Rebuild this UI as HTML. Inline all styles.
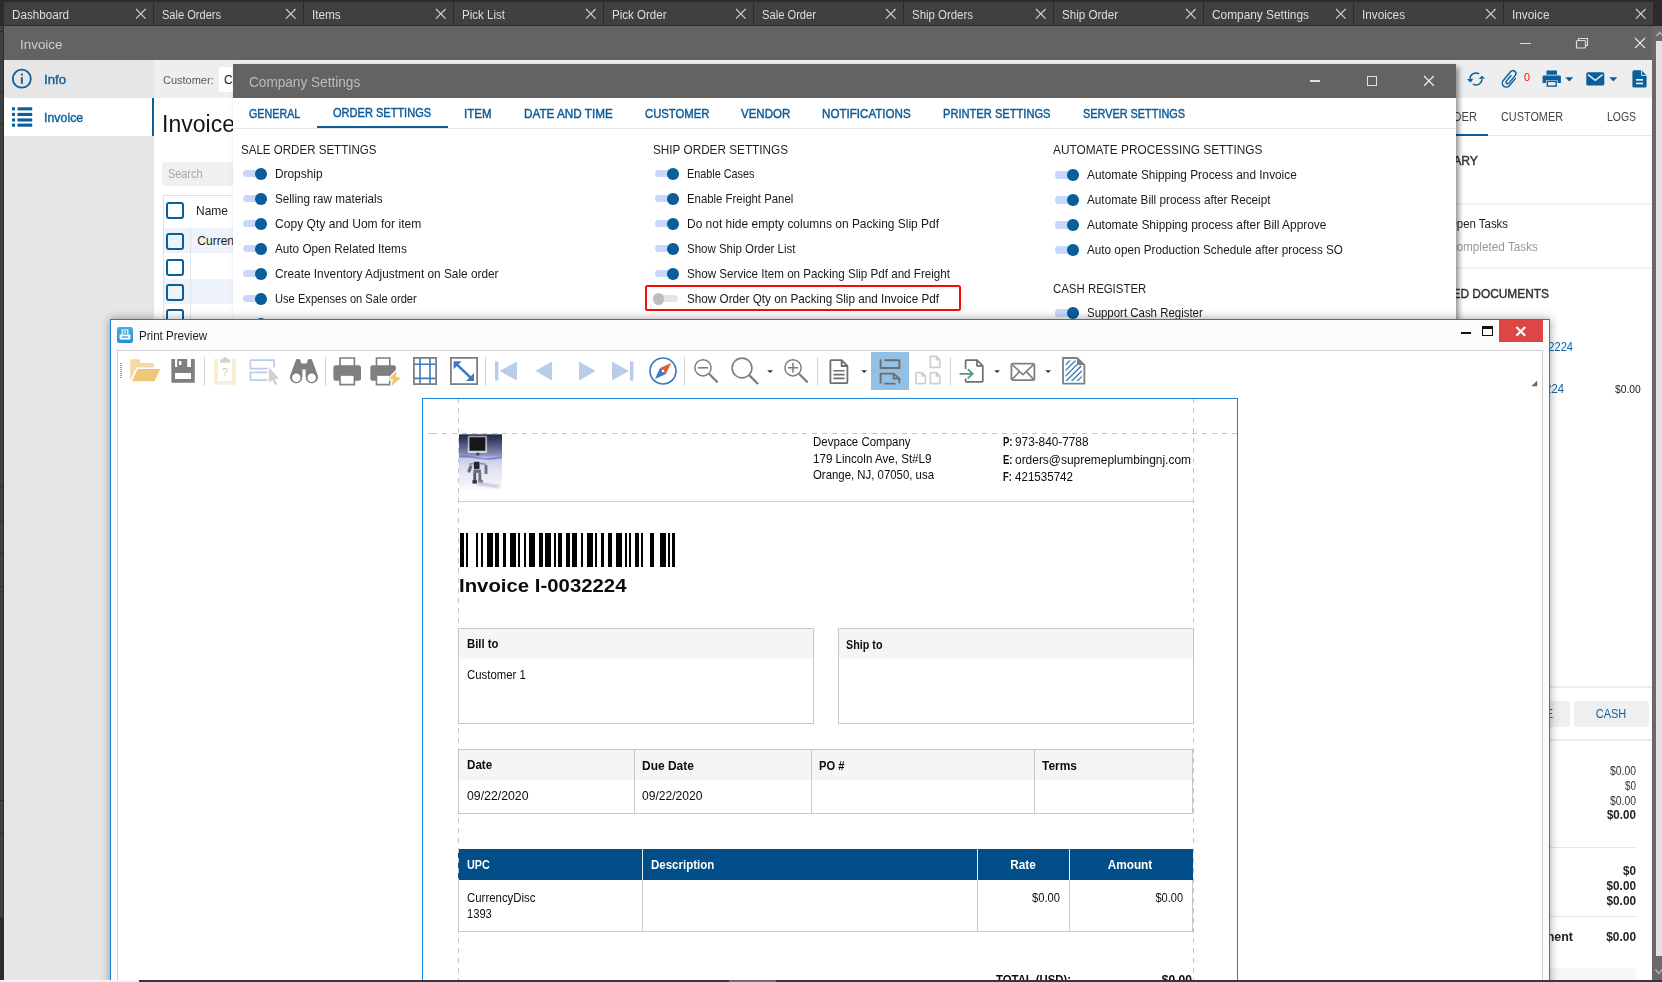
<!DOCTYPE html>
<html><head><meta charset="utf-8"><title>Invoice</title>
<style>
html,body{margin:0;padding:0;overflow:hidden;width:1662px;height:982px}
body{width:1662px;height:982px;overflow:hidden;position:relative;background:#e6e6e6;
font-family:"Liberation Sans",sans-serif;}
div,svg{position:absolute;box-sizing:border-box}
.t{white-space:nowrap;}
</style></head>
<body>
<div style="left:0;top:0;width:1662px;height:982px;overflow:hidden">
<div style="left:0px;top:0px;width:1662px;height:26px;background:#2b2b2b;"></div>
<div style="left:4px;top:2px;width:149px;height:23px;background:#404040;"></div>
<div class="t" id="t0" style="top:8.84px;font-size:12px;line-height:12px;color:#dedede;left:12.00px;transform:scaleX(0.9707);transform-origin:left center;">Dashboard</div>
<svg style="left:134.79999999999998px;top:8.399999999999999px;" width="11.6" height="11.6" viewBox="0 0 11.6 11.6"><path d="M1 1 L10.6 10.6 M10.6 1 L1 10.6" stroke="#d0d0d0" stroke-width="1.15" fill="none" stroke-linecap="butt"/></svg>
<div style="left:154px;top:2px;width:149px;height:23px;background:#404040;"></div>
<div class="t" id="t1" style="top:8.84px;font-size:12px;line-height:12px;color:#dedede;left:162.00px;transform:scaleX(0.9214);transform-origin:left center;">Sale Orders</div>
<svg style="left:284.8px;top:8.399999999999999px;" width="11.6" height="11.6" viewBox="0 0 11.6 11.6"><path d="M1 1 L10.6 10.6 M10.6 1 L1 10.6" stroke="#d0d0d0" stroke-width="1.15" fill="none" stroke-linecap="butt"/></svg>
<div style="left:304px;top:2px;width:149px;height:23px;background:#404040;"></div>
<div class="t" id="t2" style="top:8.84px;font-size:12px;line-height:12px;color:#dedede;left:312.00px;transform:scaleX(0.9781);transform-origin:left center;">Items</div>
<svg style="left:434.8px;top:8.399999999999999px;" width="11.6" height="11.6" viewBox="0 0 11.6 11.6"><path d="M1 1 L10.6 10.6 M10.6 1 L1 10.6" stroke="#d0d0d0" stroke-width="1.15" fill="none" stroke-linecap="butt"/></svg>
<div style="left:454px;top:2px;width:149px;height:23px;background:#404040;"></div>
<div class="t" id="t3" style="top:8.84px;font-size:12px;line-height:12px;color:#dedede;left:462.00px;transform:scaleX(0.9622);transform-origin:left center;">Pick List</div>
<svg style="left:584.8000000000001px;top:8.399999999999999px;" width="11.6" height="11.6" viewBox="0 0 11.6 11.6"><path d="M1 1 L10.6 10.6 M10.6 1 L1 10.6" stroke="#d0d0d0" stroke-width="1.15" fill="none" stroke-linecap="butt"/></svg>
<div style="left:604px;top:2px;width:149px;height:23px;background:#404040;"></div>
<div class="t" id="t4" style="top:8.84px;font-size:12px;line-height:12px;color:#dedede;left:612.00px;transform:scaleX(0.9614);transform-origin:left center;">Pick Order</div>
<svg style="left:734.8000000000001px;top:8.399999999999999px;" width="11.6" height="11.6" viewBox="0 0 11.6 11.6"><path d="M1 1 L10.6 10.6 M10.6 1 L1 10.6" stroke="#d0d0d0" stroke-width="1.15" fill="none" stroke-linecap="butt"/></svg>
<div style="left:754px;top:2px;width:149px;height:23px;background:#404040;"></div>
<div class="t" id="t5" style="top:8.84px;font-size:12px;line-height:12px;color:#dedede;left:762.00px;transform:scaleX(0.9305);transform-origin:left center;">Sale Order</div>
<svg style="left:884.8000000000001px;top:8.399999999999999px;" width="11.6" height="11.6" viewBox="0 0 11.6 11.6"><path d="M1 1 L10.6 10.6 M10.6 1 L1 10.6" stroke="#d0d0d0" stroke-width="1.15" fill="none" stroke-linecap="butt"/></svg>
<div style="left:904px;top:2px;width:149px;height:23px;background:#404040;"></div>
<div class="t" id="t6" style="top:8.84px;font-size:12px;line-height:12px;color:#dedede;left:912.00px;transform:scaleX(0.9527);transform-origin:left center;">Ship Orders</div>
<svg style="left:1034.8px;top:8.399999999999999px;" width="11.6" height="11.6" viewBox="0 0 11.6 11.6"><path d="M1 1 L10.6 10.6 M10.6 1 L1 10.6" stroke="#d0d0d0" stroke-width="1.15" fill="none" stroke-linecap="butt"/></svg>
<div style="left:1054px;top:2px;width:149px;height:23px;background:#404040;"></div>
<div class="t" id="t7" style="top:8.84px;font-size:12px;line-height:12px;color:#dedede;left:1062.00px;transform:scaleX(0.9650);transform-origin:left center;">Ship Order</div>
<svg style="left:1184.8px;top:8.399999999999999px;" width="11.6" height="11.6" viewBox="0 0 11.6 11.6"><path d="M1 1 L10.6 10.6 M10.6 1 L1 10.6" stroke="#d0d0d0" stroke-width="1.15" fill="none" stroke-linecap="butt"/></svg>
<div style="left:1204px;top:2px;width:149px;height:23px;background:#404040;"></div>
<div class="t" id="t8" style="top:8.84px;font-size:12px;line-height:12px;color:#dedede;left:1212.00px;transform:scaleX(0.9892);transform-origin:left center;">Company Settings</div>
<svg style="left:1334.8px;top:8.399999999999999px;" width="11.6" height="11.6" viewBox="0 0 11.6 11.6"><path d="M1 1 L10.6 10.6 M10.6 1 L1 10.6" stroke="#d0d0d0" stroke-width="1.15" fill="none" stroke-linecap="butt"/></svg>
<div style="left:1354px;top:2px;width:149px;height:23px;background:#404040;"></div>
<div class="t" id="t9" style="top:8.84px;font-size:12px;line-height:12px;color:#dedede;left:1362.00px;transform:scaleX(0.9766);transform-origin:left center;">Invoices</div>
<svg style="left:1484.8px;top:8.399999999999999px;" width="11.6" height="11.6" viewBox="0 0 11.6 11.6"><path d="M1 1 L10.6 10.6 M10.6 1 L1 10.6" stroke="#d0d0d0" stroke-width="1.15" fill="none" stroke-linecap="butt"/></svg>
<div style="left:1504px;top:2px;width:149px;height:23px;background:#404040;"></div>
<div class="t" id="t10" style="top:8.84px;font-size:12px;line-height:12px;color:#dedede;left:1512.00px;transform:scaleX(0.9860);transform-origin:left center;">Invoice</div>
<svg style="left:1634.8px;top:8.399999999999999px;" width="11.6" height="11.6" viewBox="0 0 11.6 11.6"><path d="M1 1 L10.6 10.6 M10.6 1 L1 10.6" stroke="#d0d0d0" stroke-width="1.15" fill="none" stroke-linecap="butt"/></svg>
<div style="left:0px;top:26px;width:4px;height:954px;background:#2b2b2b;"></div>
<div style="left:0px;top:26px;width:3px;height:891px;background:#404040;"></div>
<div style="left:0px;top:31px;width:3px;height:1px;background:#2b2b2b;"></div>
<div style="left:0px;top:61px;width:3px;height:1px;background:#2b2b2b;"></div>
<div style="left:0px;top:91px;width:3px;height:1px;background:#2b2b2b;"></div>
<div style="left:0px;top:124px;width:3px;height:1px;background:#2b2b2b;"></div>
<div style="left:0px;top:486px;width:3px;height:1px;background:#2b2b2b;"></div>
<div style="left:0px;top:521px;width:3px;height:1px;background:#2b2b2b;"></div>
<div style="left:0px;top:553px;width:3px;height:1px;background:#2b2b2b;"></div>
<div style="left:0px;top:586px;width:3px;height:1px;background:#2b2b2b;"></div>
<div style="left:0px;top:800px;width:3px;height:1px;background:#2b2b2b;"></div>
<div style="left:0px;top:833px;width:3px;height:1px;background:#2b2b2b;"></div>
<div style="left:4px;top:26px;width:1648px;height:34px;background:#636363;"></div>
<div class="t" id="t11" style="top:37.63px;font-size:13.2px;line-height:13.2px;color:#cdcdcd;left:20.30px;transform:scaleX(1.0168);transform-origin:left center;">Invoice</div>
<div style="left:1520px;top:42.5px;width:10.5px;height:1.3px;background:#dcdcdc;"></div>
<svg style="left:1575px;top:37px;" width="14" height="12" viewBox="0 0 14 12"><path d="M3.5 3.5 V1.5 H12.5 V8.5 H10.5" fill="none" stroke="#dcdcdc" stroke-width="1.1"/><rect x="1.5" y="3.5" width="9" height="7.5" rx="1" fill="none" stroke="#dcdcdc" stroke-width="1.2"/></svg>
<svg style="left:1633.5px;top:37.2px;" width="12" height="12" viewBox="0 0 12 12"><path d="M1 1 L11 11 M11 1 L1 11" stroke="#e6e6e6" stroke-width="1.2" fill="none" stroke-linecap="butt"/></svg>
<div style="left:1652px;top:26px;width:10px;height:954px;background:#696969;"></div>
<div style="left:1656px;top:41px;width:6px;height:915px;background:#e3e3e3;"></div>
<svg style="left:1656px;top:30.6px;" width="7" height="6" viewBox="0 0 7 6"><path d="M0.5 5 L3.8 1.5 L7 5" fill="none" stroke="#bdbdbd" stroke-width="1.2"/></svg>
<svg style="left:1655px;top:968px;" width="7" height="7" viewBox="0 0 7 7"><path d="M0.5 1.5 L3.8 5.5 L7 1.5" fill="none" stroke="#bdbdbd" stroke-width="1.2"/></svg>
<div style="left:4px;top:60px;width:150px;height:920px;background:#e6e6e6;"></div>
<div style="left:4px;top:98px;width:148px;height:38px;background:#ffffff;"></div>
<div style="left:152px;top:98px;width:2px;height:38px;background:#095e9b;"></div>
<svg style="left:11px;top:68px;" width="22" height="22" viewBox="0 0 22 22"><circle cx="10.8" cy="10.7" r="9" fill="none" stroke="#095e9b" stroke-width="1.8"/><rect x="9.9" y="9.2" width="1.9" height="6.6" fill="#095e9b"/><rect x="9.9" y="5.6" width="1.9" height="2" fill="#095e9b"/></svg>
<div class="t" id="t12" style="top:73.80px;font-size:12.4px;line-height:12.4px;color:#10639f;-webkit-text-stroke:0.42px currentColor;left:43.80px;transform:scaleX(1.0642);transform-origin:left center;">Info</div>
<svg style="left:11.8px;top:107px;" width="21" height="20" viewBox="0 0 21 20"><rect x="0" y="0.3" width="3" height="3.1" fill="#095e9b"/><rect x="5.5" y="0.3" width="14.7" height="3.1" fill="#095e9b"/><rect x="0" y="5.9" width="3" height="3.1" fill="#095e9b"/><rect x="5.5" y="5.9" width="14.7" height="3.1" fill="#095e9b"/><rect x="0" y="11.4" width="3" height="3.1" fill="#095e9b"/><rect x="5.5" y="11.4" width="14.7" height="3.1" fill="#095e9b"/><rect x="0" y="16.6" width="3" height="3.1" fill="#095e9b"/><rect x="5.5" y="16.6" width="14.7" height="3.1" fill="#095e9b"/></svg>
<div class="t" id="t13" style="top:112.10px;font-size:12.4px;line-height:12.4px;color:#10639f;-webkit-text-stroke:0.42px currentColor;left:43.80px;transform:scaleX(0.9983);transform-origin:left center;">Invoice</div>
<div style="left:154px;top:60px;width:1498px;height:38px;background:#eeeeee;"></div>
<div style="left:154px;top:98px;width:1498px;height:882px;background:#ffffff;"></div>
<div class="t" id="t14" style="top:74.89px;font-size:11px;line-height:11px;color:#5a5a5a;left:162.70px;transform:scaleX(0.9990);transform-origin:left center;">Customer:</div>
<div style="left:219px;top:67px;width:200px;height:25px;background:#ffffff;border-radius:3px;"></div>
<div class="t" id="t15" style="top:73.74px;font-size:12px;line-height:12px;color:#222;left:224.00px;">Customer 1</div>
<div class="t" id="t16" style="top:112.53px;font-size:23px;line-height:23px;color:#141414;left:162.20px;transform:scaleX(1.0017);transform-origin:left center;">Invoice</div>
<div style="left:162px;top:162px;width:240px;height:24px;background:#f0f0f0;border-radius:3px;"></div>
<div class="t" id="t17" style="top:168.04px;font-size:12px;line-height:12px;color:#a8a8a8;left:168.00px;transform:scaleX(0.9071);transform-origin:left center;">Search</div>
<div style="left:163px;top:195px;width:600px;height:200px;background:#ffffff;border:1px solid #dbe3ea;"></div>
<div style="left:164px;top:227.5px;width:600px;height:25.6px;background:#edf3f8;"></div>
<div style="left:164px;top:278.7px;width:600px;height:25.6px;background:#edf3f8;"></div>
<div style="left:190px;top:227.5px;width:1px;height:120px;background:#dfe6ec;"></div>
<div style="left:166.4px;top:202.3px;width:17.6px;height:17px;border:2px solid #095e9b;border-radius:3px;"></div>
<div style="left:166.4px;top:232.8px;width:17.6px;height:17px;border:2px solid #095e9b;border-radius:3px;"></div>
<div style="left:166.4px;top:258.6px;width:17.6px;height:17px;border:2px solid #095e9b;border-radius:3px;"></div>
<div style="left:166.4px;top:284.4px;width:17.6px;height:17px;border:2px solid #095e9b;border-radius:3px;"></div>
<div style="left:166.4px;top:308.7px;width:17.6px;height:17px;border:2px solid #095e9b;border-radius:3px;"></div>
<div class="t" id="t18" style="top:205.04px;font-size:12px;line-height:12px;color:#222;left:196.40px;transform:scaleX(0.9995);transform-origin:left center;">Name</div>
<div class="t" id="t19" style="top:235.24px;font-size:12px;line-height:12px;color:#222;left:197.30px;">CurrencyDisc</div>
<svg style="left:1466px;top:70px;" width="20" height="18" viewBox="0 0 20 18"><path d="M4.01 8.69 A6.0 6.0 0 0 1 13.18 3.91" fill="none" stroke="#095e9b" stroke-width="1.5"/><path d="M0.8 9.3 L7.3 8.8 L4.7 12.4 Z" fill="#095e9b"/><path d="M15.99 9.31 A6.0 6.0 0 0 1 6.82 14.09" fill="none" stroke="#095e9b" stroke-width="1.5"/><path d="M15.8 5.7 L12.7 8.9 L19.1 8.5 Z" fill="#095e9b"/></svg>
<svg style="left:1499px;top:68px;" width="22" height="22" viewBox="0 0 22 22"><g transform="translate(10.9,10.8) rotate(40)" fill="none" stroke="#095e9b" stroke-width="1.45" stroke-linecap="round"><path d="M4 -3.6 V5.6 A4 4 0 0 1 -4 5.6 V-5.8 A3 3 0 0 1 2 -5.8 V4 A1.6 1.6 0 0 1 -1.2 4 V-3.2"/></g></svg>
<div class="t" id="t20" style="top:72.23px;font-size:10.6px;line-height:10.6px;color:#fb0d0d;left:1524.20px;transform:scaleX(1.0159);transform-origin:left center;">0</div>
<svg style="left:1542px;top:70px;" width="20" height="17" viewBox="0 0 20 17"><rect x="4.5" y="0.5" width="10.5" height="4.2" fill="#095e9b"/><path d="M1.6 5.6 H17.9 Q18.9 5.6 18.9 6.6 V13 H15.6 V10.2 H3.9 V13 H0.6 V6.6 Q0.6 5.6 1.6 5.6 Z" fill="#095e9b"/><rect x="5.3" y="11.4" width="8.9" height="4.7" fill="none" stroke="#095e9b" stroke-width="1.4"/></svg>
<svg style="left:1565px;top:76.5px;" width="9" height="5" viewBox="0 0 9 5"><path d="M0.3 0.3 H8.3 L4.3 4.6 Z" fill="#095e9b"/></svg>
<svg style="left:1586px;top:72px;" width="19" height="14" viewBox="0 0 19 14"><rect x="0.3" y="0.3" width="18" height="13.2" rx="1.6" fill="#095e9b"/><path d="M2 2.6 L9.3 8.3 L16.6 2.6" fill="none" stroke="#eeeeee" stroke-width="1.5"/></svg>
<svg style="left:1609px;top:76.5px;" width="9" height="5" viewBox="0 0 9 5"><path d="M0.3 0.3 H8.3 L4.3 4.6 Z" fill="#095e9b"/></svg>
<svg style="left:1632px;top:70px;" width="16" height="18" viewBox="0 0 16 18"><path d="M2 0.3 H9.5 L14.6 5.4 V16 Q14.6 17.6 13 17.6 H2 Q0.4 17.6 0.4 16 V1.9 Q0.4 0.3 2 0.3 Z" fill="#095e9b"/><rect x="4" y="9" width="7" height="1.7" fill="#eeeeee"/><rect x="4" y="12.6" width="7" height="1.7" fill="#eeeeee"/><path d="M9.5 0.3 V5.4 H14.6" fill="none" stroke="#eeeeee" stroke-width="0.9"/></svg>
<div style="left:1400px;top:135px;width:252px;height:1px;background:#e9e9e9;"></div>
<div style="left:1400px;top:134px;width:88px;height:2px;background:#095e9b;"></div>
<div class="t" id="t21" style="top:110.54px;font-size:12px;line-height:12px;color:#444;left:277.00px;width:1200px;text-align:right;transform:scaleX(0.9229);transform-origin:right center;">ORDER</div>
<div class="t" id="t22" style="top:110.54px;font-size:12px;line-height:12px;color:#444;left:1501.00px;transform:scaleX(0.9057);transform-origin:left center;">CUSTOMER</div>
<div class="t" id="t23" style="top:110.54px;font-size:12px;line-height:12px;color:#444;left:1607.00px;transform:scaleX(0.8693);transform-origin:left center;">LOGS</div>
<div class="t" id="t24" style="top:155.39px;font-size:12.3px;line-height:12.3px;color:#333;-webkit-text-stroke:0.42px currentColor;left:277.70px;width:1200px;text-align:right;transform:scaleX(0.9898);transform-origin:right center;">SUMMARY</div>
<div style="left:1400px;top:202.5px;width:252px;height:2px;background:#f1f1f1;"></div>
<div style="left:1400px;top:266.5px;width:252px;height:2px;background:#f1f1f1;"></div>
<div class="t" id="t25" style="top:217.89px;font-size:12.3px;line-height:12.3px;color:#222;left:307.70px;width:1200px;text-align:right;transform:scaleX(0.9271);transform-origin:right center;">Open Tasks</div>
<div class="t" id="t26" style="top:240.59px;font-size:12.3px;line-height:12.3px;color:#9a9a9a;left:337.70px;width:1200px;text-align:right;transform:scaleX(0.9565);transform-origin:right center;">Completed Tasks</div>
<div class="t" id="t27" style="top:287.59px;font-size:12.3px;line-height:12.3px;color:#333;-webkit-text-stroke:0.42px currentColor;left:349.00px;width:1200px;text-align:right;transform:scaleX(0.9677);transform-origin:right center;">RELATED DOCUMENTS</div>
<div class="t" id="t28" style="top:341.09px;font-size:12.3px;line-height:12.3px;color:#10639f;left:373.00px;width:1200px;text-align:right;transform:scaleX(0.9032);transform-origin:right center;">SO-0032224</div>
<div class="t" id="t29" style="top:382.59px;font-size:12.3px;line-height:12.3px;color:#10639f;left:364.00px;width:1200px;text-align:right;transform:scaleX(0.9140);transform-origin:right center;">S-0032224</div>
<div class="t" id="t30" style="top:383.18px;font-size:11.6px;line-height:11.6px;color:#222;left:1615.30px;transform:scaleX(0.8857);transform-origin:left center;">$0.00</div>
<div style="left:1540px;top:686px;width:112px;height:1.5px;background:#ececec;"></div>
<div style="left:1540px;top:739px;width:112px;height:1.5px;background:#ececec;"></div>
<div style="left:1500px;top:701px;width:70px;height:26px;background:#efefef;border-radius:3px;"></div>
<div style="left:1574px;top:701px;width:75px;height:26px;background:#efefef;border-radius:3px;"></div>
<div class="t" id="t31" style="top:708.09px;font-size:12.3px;line-height:12.3px;color:#10639f;left:1011.30px;width:1200px;text-align:center;transform:scaleX(0.8925);transform-origin:center center;">CASH</div>
<div class="t" id="t32" style="top:708.09px;font-size:12.3px;line-height:12.3px;color:#10639f;left:353.00px;width:1200px;text-align:right;transform:scaleX(0.9886);transform-origin:right center;">INVOICE</div>
<div class="t" id="t33" style="top:764.84px;font-size:12px;line-height:12px;color:#333;left:436.00px;width:1200px;text-align:right;transform:scaleX(0.8658);transform-origin:right center;">$0.00</div>
<div class="t" id="t34" style="top:779.84px;font-size:12px;line-height:12px;color:#333;left:436.00px;width:1200px;text-align:right;transform:scaleX(0.8234);transform-origin:right center;">$0</div>
<div class="t" id="t35" style="top:794.84px;font-size:12px;line-height:12px;color:#333;left:436.00px;width:1200px;text-align:right;transform:scaleX(0.8658);transform-origin:right center;">$0.00</div>
<div class="t" id="t36" style="top:809.33px;font-size:12.6px;line-height:12.6px;color:#222;font-weight:700;left:436.00px;width:1200px;text-align:right;transform:scaleX(0.9240);transform-origin:right center;">$0.00</div>
<div style="left:1540px;top:846.5px;width:96px;height:1px;background:#e6e6e6;"></div>
<div class="t" id="t37" style="top:864.53px;font-size:12.6px;line-height:12.6px;color:#222;font-weight:700;left:436.00px;width:1200px;text-align:right;transform:scaleX(0.9275);transform-origin:right center;">$0</div>
<div class="t" id="t38" style="top:879.53px;font-size:12.6px;line-height:12.6px;color:#222;font-weight:700;left:436.00px;width:1200px;text-align:right;transform:scaleX(0.9360);transform-origin:right center;">$0.00</div>
<div class="t" id="t39" style="top:894.53px;font-size:12.6px;line-height:12.6px;color:#222;font-weight:700;left:436.00px;width:1200px;text-align:right;transform:scaleX(0.9360);transform-origin:right center;">$0.00</div>
<div style="left:1540px;top:916px;width:96px;height:1px;background:#e6e6e6;"></div>
<div class="t" id="t40" style="top:931.33px;font-size:12.6px;line-height:12.6px;color:#222;font-weight:700;left:373.00px;width:1200px;text-align:right;transform:scaleX(0.9905);transform-origin:right center;">Payment</div>
<div class="t" id="t41" style="top:931.33px;font-size:12.6px;line-height:12.6px;color:#222;font-weight:700;left:436.00px;width:1200px;text-align:right;transform:scaleX(0.9456);transform-origin:right center;">$0.00</div>
<div style="left:1500px;top:968px;width:136px;height:14px;background:#f6f6f6;border-radius:4px;"></div>
<div style="left:233px;top:64px;width:1223px;height:300px;background:#fff;overflow:hidden;box-shadow:3px 3px 5px rgba(0,0,0,.42);"><div style="left:0px;top:0px;width:1223px;height:34px;background:#636363;"></div>
<div class="t" id="t42" style="top:11.25px;font-size:14px;line-height:14px;color:#bcbcbc;left:16.30px;transform:scaleX(0.9720);transform-origin:left center;">Company Settings</div>
<div style="left:1076.7px;top:16.400000000000006px;width:10.5px;height:1.3px;background:#e0e0e0;"></div>
<div style="left:1133.5px;top:11.799999999999997px;width:10.5px;height:10.2px;border:1.3px solid #e0e0e0;"></div>
<svg style="left:1189.6px;top:11.299999999999997px;" width="11.8" height="11.8" viewBox="0 0 11.8 11.8"><path d="M1 1 L10.8 10.8 M10.8 1 L1 10.8" stroke="#ececec" stroke-width="1.25" fill="none" stroke-linecap="butt"/></svg>
<div class="t" id="t43" style="top:43.52px;font-size:12.2px;line-height:12.2px;color:#0b5a97;-webkit-text-stroke:0.42px currentColor;left:16.25px;transform:scaleX(0.8798);transform-origin:left center;">GENERAL</div>
<div class="t" id="t44" style="top:42.67px;font-size:12.2px;line-height:12.2px;color:#0b5a97;-webkit-text-stroke:0.42px currentColor;left:100.00px;transform:scaleX(0.9055);transform-origin:left center;">ORDER SETTINGS</div>
<div class="t" id="t45" style="top:43.52px;font-size:12.2px;line-height:12.2px;color:#0b5a97;-webkit-text-stroke:0.42px currentColor;left:230.75px;transform:scaleX(0.9442);transform-origin:left center;">ITEM</div>
<div class="t" id="t46" style="top:43.52px;font-size:12.2px;line-height:12.2px;color:#0b5a97;-webkit-text-stroke:0.42px currentColor;left:290.75px;transform:scaleX(0.9612);transform-origin:left center;">DATE AND TIME</div>
<div class="t" id="t47" style="top:43.52px;font-size:12.2px;line-height:12.2px;color:#0b5a97;-webkit-text-stroke:0.42px currentColor;left:411.50px;transform:scaleX(0.9276);transform-origin:left center;">CUSTOMER</div>
<div class="t" id="t48" style="top:43.52px;font-size:12.2px;line-height:12.2px;color:#0b5a97;-webkit-text-stroke:0.42px currentColor;left:507.75px;transform:scaleX(0.9443);transform-origin:left center;">VENDOR</div>
<div class="t" id="t49" style="top:43.52px;font-size:12.2px;line-height:12.2px;color:#0b5a97;-webkit-text-stroke:0.42px currentColor;left:588.75px;transform:scaleX(0.9521);transform-origin:left center;">NOTIFICATIONS</div>
<div class="t" id="t50" style="top:43.52px;font-size:12.2px;line-height:12.2px;color:#0b5a97;-webkit-text-stroke:0.42px currentColor;left:709.50px;transform:scaleX(0.9123);transform-origin:left center;">PRINTER SETTINGS</div>
<div class="t" id="t51" style="top:43.52px;font-size:12.2px;line-height:12.2px;color:#0b5a97;-webkit-text-stroke:0.42px currentColor;left:849.50px;transform:scaleX(0.8929);transform-origin:left center;">SERVER SETTINGS</div>
<div style="left:0px;top:64px;width:1223px;height:1px;background:#e7e7e7;"></div>
<div style="left:84px;top:61.5px;width:130.5px;height:2.5px;background:#095e9b;"></div>
<div class="t" id="t52" style="top:79.99px;font-size:12.3px;line-height:12.3px;color:#1f1f1f;left:8.25px;transform:scaleX(0.9397);transform-origin:left center;">SALE ORDER SETTINGS</div>
<div class="t" id="t53" style="top:79.99px;font-size:12.3px;line-height:12.3px;color:#1f1f1f;left:420.00px;transform:scaleX(0.9560);transform-origin:left center;">SHIP ORDER SETTINGS</div>
<div class="t" id="t54" style="top:79.99px;font-size:12.3px;line-height:12.3px;color:#1f1f1f;left:820.00px;transform:scaleX(0.9631);transform-origin:left center;">AUTOMATE PROCESSING SETTINGS</div>
<div class="t" id="t55" style="top:218.69px;font-size:12.3px;line-height:12.3px;color:#1f1f1f;left:820.00px;transform:scaleX(0.9283);transform-origin:left center;">CASH REGISTER</div>
<div style="left:9.949999999999989px;top:106.15px;width:21px;height:7.3px;background:#c6d8fb;border-radius:3.7px;"></div><div style="left:22.44999999999999px;top:103.94999999999999px;width:11.6px;height:11.6px;background:#095e9b;border-radius:50%;"></div>
<div class="t" id="t56" style="top:104.12px;font-size:12.2px;line-height:12.2px;color:#1a1a1a;left:42.25px;transform:scaleX(0.9737);transform-origin:left center;">Dropship</div>
<div style="left:9.949999999999989px;top:131.15px;width:21px;height:7.3px;background:#c6d8fb;border-radius:3.7px;"></div><div style="left:22.44999999999999px;top:128.95px;width:11.6px;height:11.6px;background:#095e9b;border-radius:50%;"></div>
<div class="t" id="t57" style="top:129.12px;font-size:12.2px;line-height:12.2px;color:#1a1a1a;left:42.25px;transform:scaleX(0.9561);transform-origin:left center;">Selling raw materials</div>
<div style="left:9.949999999999989px;top:156.15px;width:21px;height:7.3px;background:#c6d8fb;border-radius:3.7px;"></div><div style="left:22.44999999999999px;top:153.95px;width:11.6px;height:11.6px;background:#095e9b;border-radius:50%;"></div>
<div class="t" id="t58" style="top:154.12px;font-size:12.2px;line-height:12.2px;color:#1a1a1a;left:42.25px;transform:scaleX(0.9905);transform-origin:left center;">Copy Qty and Uom for item</div>
<div style="left:9.949999999999989px;top:181.15px;width:21px;height:7.3px;background:#c6d8fb;border-radius:3.7px;"></div><div style="left:22.44999999999999px;top:178.95px;width:11.6px;height:11.6px;background:#095e9b;border-radius:50%;"></div>
<div class="t" id="t59" style="top:179.12px;font-size:12.2px;line-height:12.2px;color:#1a1a1a;left:42.25px;transform:scaleX(0.9627);transform-origin:left center;">Auto Open Related Items</div>
<div style="left:9.949999999999989px;top:206.14999999999998px;width:21px;height:7.3px;background:#c6d8fb;border-radius:3.7px;"></div><div style="left:22.44999999999999px;top:203.95px;width:11.6px;height:11.6px;background:#095e9b;border-radius:50%;"></div>
<div class="t" id="t60" style="top:204.12px;font-size:12.2px;line-height:12.2px;color:#1a1a1a;left:42.25px;transform:scaleX(0.9703);transform-origin:left center;">Create Inventory Adjustment on Sale order</div>
<div style="left:9.949999999999989px;top:231.14999999999998px;width:21px;height:7.3px;background:#c6d8fb;border-radius:3.7px;"></div><div style="left:22.44999999999999px;top:228.95px;width:11.6px;height:11.6px;background:#095e9b;border-radius:50%;"></div>
<div class="t" id="t61" style="top:229.12px;font-size:12.2px;line-height:12.2px;color:#1a1a1a;left:42.25px;transform:scaleX(0.9136);transform-origin:left center;">Use Expenses on Sale order</div>
<div style="left:9.949999999999989px;top:256.15px;width:21px;height:7.3px;background:#c6d8fb;border-radius:3.7px;"></div><div style="left:22.44999999999999px;top:253.95px;width:11.6px;height:11.6px;background:#095e9b;border-radius:50%;"></div>
<div class="t" id="t62" style="top:254.12px;font-size:12.2px;line-height:12.2px;color:#1a1a1a;left:42.25px;transform:scaleX(0.9393);transform-origin:left center;">Use Discount on Sale order</div>
<div style="left:421.70000000000005px;top:106.15px;width:21px;height:7.3px;background:#c6d8fb;border-radius:3.7px;"></div><div style="left:434.20000000000005px;top:103.94999999999999px;width:11.6px;height:11.6px;background:#095e9b;border-radius:50%;"></div>
<div class="t" id="t63" style="top:104.12px;font-size:12.2px;line-height:12.2px;color:#1a1a1a;left:454.00px;transform:scaleX(0.8894);transform-origin:left center;">Enable Cases</div>
<div style="left:421.70000000000005px;top:131.15px;width:21px;height:7.3px;background:#c6d8fb;border-radius:3.7px;"></div><div style="left:434.20000000000005px;top:128.95px;width:11.6px;height:11.6px;background:#095e9b;border-radius:50%;"></div>
<div class="t" id="t64" style="top:129.12px;font-size:12.2px;line-height:12.2px;color:#1a1a1a;left:454.00px;transform:scaleX(0.9334);transform-origin:left center;">Enable Freight Panel</div>
<div style="left:421.70000000000005px;top:156.15px;width:21px;height:7.3px;background:#c6d8fb;border-radius:3.7px;"></div><div style="left:434.20000000000005px;top:153.95px;width:11.6px;height:11.6px;background:#095e9b;border-radius:50%;"></div>
<div class="t" id="t65" style="top:154.12px;font-size:12.2px;line-height:12.2px;color:#1a1a1a;left:454.00px;transform:scaleX(0.9814);transform-origin:left center;">Do not hide empty columns on Packing Slip Pdf</div>
<div style="left:421.70000000000005px;top:181.15px;width:21px;height:7.3px;background:#c6d8fb;border-radius:3.7px;"></div><div style="left:434.20000000000005px;top:178.95px;width:11.6px;height:11.6px;background:#095e9b;border-radius:50%;"></div>
<div class="t" id="t66" style="top:179.12px;font-size:12.2px;line-height:12.2px;color:#1a1a1a;left:454.00px;transform:scaleX(0.9421);transform-origin:left center;">Show Ship Order List</div>
<div style="left:421.70000000000005px;top:206.14999999999998px;width:21px;height:7.3px;background:#c6d8fb;border-radius:3.7px;"></div><div style="left:434.20000000000005px;top:203.95px;width:11.6px;height:11.6px;background:#095e9b;border-radius:50%;"></div>
<div class="t" id="t67" style="top:204.12px;font-size:12.2px;line-height:12.2px;color:#1a1a1a;left:454.00px;transform:scaleX(0.9539);transform-origin:left center;">Show Service Item on Packing Slip Pdf and Freight</div>
<div style="left:423.70000000000005px;top:231.14999999999998px;width:21.5px;height:7.3px;background:#e4e4e4;border-radius:3.7px;"></div><div style="left:419.9000000000001px;top:228.95px;width:11.6px;height:11.6px;background:#bdbdbd;border-radius:50%;"></div>
<div class="t" id="t68" style="top:229.12px;font-size:12.2px;line-height:12.2px;color:#1a1a1a;left:454.00px;transform:scaleX(0.9612);transform-origin:left center;">Show Order Qty on Packing Slip and Invoice Pdf</div>
<div style="left:411.5px;top:220.5px;width:316.5px;height:26.5px;border:2.2px solid #f20d0d;border-radius:2.5px;"></div>
<div style="left:821.7px;top:107.4px;width:21px;height:7.3px;background:#c6d8fb;border-radius:3.7px;"></div><div style="left:834.2px;top:105.19999999999999px;width:11.6px;height:11.6px;background:#095e9b;border-radius:50%;"></div>
<div class="t" id="t69" style="top:105.37px;font-size:12.2px;line-height:12.2px;color:#1a1a1a;left:854.00px;transform:scaleX(0.9705);transform-origin:left center;">Automate Shipping Process and Invoice</div>
<div style="left:821.7px;top:132.4px;width:21px;height:7.3px;background:#c6d8fb;border-radius:3.7px;"></div><div style="left:834.2px;top:130.2px;width:11.6px;height:11.6px;background:#095e9b;border-radius:50%;"></div>
<div class="t" id="t70" style="top:130.37px;font-size:12.2px;line-height:12.2px;color:#1a1a1a;left:854.00px;transform:scaleX(0.9640);transform-origin:left center;">Automate Bill process after Receipt</div>
<div style="left:821.7px;top:157.4px;width:21px;height:7.3px;background:#c6d8fb;border-radius:3.7px;"></div><div style="left:834.2px;top:155.2px;width:11.6px;height:11.6px;background:#095e9b;border-radius:50%;"></div>
<div class="t" id="t71" style="top:155.37px;font-size:12.2px;line-height:12.2px;color:#1a1a1a;left:854.00px;transform:scaleX(0.9792);transform-origin:left center;">Automate Shipping process after Bill Approve</div>
<div style="left:821.7px;top:182.4px;width:21px;height:7.3px;background:#c6d8fb;border-radius:3.7px;"></div><div style="left:834.2px;top:180.2px;width:11.6px;height:11.6px;background:#095e9b;border-radius:50%;"></div>
<div class="t" id="t72" style="top:180.37px;font-size:12.2px;line-height:12.2px;color:#1a1a1a;left:854.00px;transform:scaleX(0.9614);transform-origin:left center;">Auto open Production Schedule after process SO</div>
<div style="left:821.7px;top:245.29999999999995px;width:21px;height:7.3px;background:#c6d8fb;border-radius:3.7px;"></div><div style="left:834.2px;top:243.09999999999997px;width:11.6px;height:11.6px;background:#095e9b;border-radius:50%;"></div>
<div class="t" id="t73" style="top:243.27px;font-size:12.2px;line-height:12.2px;color:#1a1a1a;left:854.00px;transform:scaleX(0.9388);transform-origin:left center;">Support Cash Register</div></div>
<div style="left:110px;top:319px;width:1440px;height:670px;background:#fcfcfc;border:1px solid #1b80d4;overflow:hidden;box-shadow:0 0 9px rgba(0,0,0,.38);"><div style="left:0;top:0;width:1438px;height:660px;overflow:hidden"><svg style="left:6px;top:7px;" width="16" height="16" viewBox="0 0 16 16"><defs><linearGradient id="pi" x1="0" y1="0" x2="0" y2="1"><stop offset="0" stop-color="#3fb0ea"/><stop offset="1" stop-color="#1e8fd6"/></linearGradient></defs><rect x="0" y="0" width="16" height="16" rx="2.2" fill="url(#pi)"/><path d="M5.2 7 V3 H10.8 V7" fill="none" stroke="#fff" stroke-width="1.2"/><path d="M2.6 7.4 H13.4 V12.6 H2.6 Z" fill="#fff"/><rect x="4.8" y="9.4" width="6.4" height="1.3" fill="#2a9be0"/><rect x="7" y="4.6" width="2" height="1.6" fill="#fff"/></svg>
<div class="t" id="t74" style="top:9.84px;font-size:12px;line-height:12px;color:#1e1e1e;left:28.30px;transform:scaleX(0.9648);transform-origin:left center;">Print Preview</div>
<div style="left:1349.5px;top:11.600000000000023px;width:10.6px;height:2.5px;background:#111;"></div>
<div style="left:1371.3px;top:5.800000000000011px;width:10.8px;height:10.4px;border:1.3px solid #111;border-top:3.2px solid #111;"></div>
<div style="left:1387.5px;top:0px;width:44px;height:22px;background:#e04545;"></div>
<svg style="left:1404px;top:6px;" width="12" height="11" viewBox="0 0 12 11"><path d="M1.4 1 L10.2 9.8 M10.2 1 L1.4 9.8" stroke="#fff" stroke-width="2.1" fill="none"/></svg>
<div style="left:6px;top:30px;width:1426px;height:640px;background:#ffffff;border:1px solid #cfcfcf;"></div>
<div style="left:9px;top:43px;width:2px;height:16px;background:repeating-linear-gradient(180deg,#9b9b9b 0,#9b9b9b 1px,transparent 1px,transparent 2px)"></div>
<svg style="left:18px;top:38px;" width="33" height="25" viewBox="0 0 33 25"><path d="M1.2 2.2 Q1.2 1.2 2.2 1.2 H10.4 Q11.2 1.2 11.2 2 V5 H24 Q25 5 25 6 V9.6 H7.6 L1.2 22.4 Z" fill="#f3d9a4"/><path d="M8.6 11 H31.4 L25.6 23.2 H3 Z" fill="#edc67a"/></svg>
<svg style="left:59px;top:38px;" width="26" height="26" viewBox="0 0 26 26"><path d="M1.4 1.6 Q1.4 1 2 1 H24.2 Q24.8 1 24.8 1.6 V24.2 Q24.8 24.8 24.2 24.8 H2 Q1.4 24.8 1.4 24.2 Z" fill="#7f7f7f"/><rect x="5" y="1" width="2.2" height="8" fill="#fff"/><rect x="17.2" y="1" width="3.8" height="8" fill="#fff"/><rect x="9" y="3" width="2.4" height="4" fill="#fff"/><rect x="5" y="15" width="16" height="6" fill="#fff"/></svg>
<div style="left:93px;top:37px;width:1px;height:29px;background:#d4d4d4"></div>
<svg style="left:102px;top:36px;" width="25" height="30" viewBox="0 0 25 30"><path d="M1 3 H23 V28.8 H1 Z M5 3 V25 H19 V3 Z" fill="#fbedd5" fill-rule="evenodd"/><path d="M7 3.2 H9.6 Q9.6 1 12 1 Q14.4 1 14.4 3.2 H17 V6.8 H7 Z" fill="#d2d2d2"/><text x="12" y="20" font-family="Liberation Sans" font-size="10.5" fill="#c9c9c9" text-anchor="middle">?</text></svg>
<svg style="left:137px;top:38px;" width="32" height="28" viewBox="0 0 32 28"><path d="M2.4 2.2 H26.2 V9.6 M19.6 10.6 H2.4 V2.2" fill="none" stroke="#b9cde6" stroke-width="1.7"/><path d="M19.4 14.4 H2.4 V22.2 H19.4" fill="none" stroke="#b9cde6" stroke-width="1.7"/><path d="M20.8 9.6 L31.2 20.4 L26.6 20.8 L29.2 26 L27 27 L24.4 21.8 L20.8 24.8 Z" fill="#d0d0d0"/></svg>
<svg style="left:178px;top:38px;" width="30" height="26" viewBox="0 0 30 26"><path d="M7.2 1.2 Q9.4 0.4 11.2 1.6 L12.4 5.6 H17.6 L18.8 1.6 Q20.6 0.4 22.8 1.2 L28.8 17.6 A6.2 6.2 0 1 1 16.6 19.6 V11.4 H13.4 V19.6 A6.2 6.2 0 1 1 1.2 17.6 Z" fill="#7f7f7f"/><circle cx="7.3" cy="19.7" r="4.2" fill="#fff"/><circle cx="22.7" cy="19.7" r="4.2" fill="#fff"/></svg>
<div style="left:214px;top:37px;width:1px;height:29px;background:#d4d4d4"></div>
<svg style="left:222px;top:37px;" width="29" height="29" viewBox="0 0 29 29"><path d="M7 9 V1 H21.4 V9" fill="#fff" stroke="#7f7f7f" stroke-width="1.7"/><path d="M0.4 10.6 Q0.4 8.2 2.8 8.2 H25.6 Q28 8.2 28 10.6 V21.4 Q28 23.8 25.6 23.8 H2.8 Q0.4 23.8 0.4 21.4 Z" fill="#7f7f7f"/><rect x="7" y="18" width="14.4" height="9.6" fill="#fff" stroke="#7f7f7f" stroke-width="1.7"/></svg>
<svg style="left:259px;top:37px;" width="33" height="31" viewBox="0 0 33 31"><g transform="scale(0.925,1)"><path d="M7 9 V1 H21.4 V9" fill="#fff" stroke="#7f7f7f" stroke-width="1.7"/><path d="M0.4 10.6 Q0.4 8.2 2.8 8.2 H25.6 Q28 8.2 28 10.6 V21.4 Q28 23.8 25.6 23.8 H2.8 Q0.4 23.8 0.4 21.4 Z" fill="#7f7f7f"/><rect x="7" y="18" width="14.4" height="9.6" fill="#fff" stroke="#7f7f7f" stroke-width="1.7"/></g><path d="M26.6 14 L18.6 22.2 L23.2 22.6 L21 29.8 L31 20.4 L26 20.2 Z" fill="#fff" stroke="#fff" stroke-width="2.6" stroke-linejoin="round"/><path d="M26.6 14 L18.6 22.2 L23.2 22.6 L21 29.8 L31 20.4 L26 20.2 Z" fill="#f1c673"/></svg>
<svg style="left:301px;top:36px;" width="26" height="30" viewBox="0 0 26 30"><path d="M8 2 V28 M18 2 V28 M2 8.2 H24 M2 22.4 H24" stroke="#3d7abf" stroke-width="1.6" fill="none"/><rect x="1.9" y="1.9" width="22.2" height="26.2" fill="none" stroke="#7f7f7f" stroke-width="1.8"/></svg>
<svg style="left:338px;top:36px;" width="30" height="30" viewBox="0 0 30 30"><rect x="1.9" y="1.9" width="26.2" height="26.2" fill="none" stroke="#7f7f7f" stroke-width="1.8"/><path d="M8 8.6 L21.6 21.6" stroke="#3d7abf" stroke-width="2.6"/><path d="M4.6 5.2 H12.6 L4.6 13.2 Z M25 25 H17 L25 17 Z" fill="#3d7abf"/></svg>
<div style="left:374px;top:37px;width:1px;height:29px;background:#d4d4d4"></div>
<svg style="left:383px;top:40px;" width="24" height="22" viewBox="0 0 24 22"><rect x="1" y="1.4" width="3.4" height="19.2" fill="#b9cde6"/><path d="M23 1.4 V20.6 L5.6 11 Z" fill="#b9cde6"/></svg>
<svg style="left:423px;top:40px;" width="19" height="22" viewBox="0 0 19 22"><path d="M18 1.4 V20.6 L1.4 11 Z" fill="#b9cde6"/></svg>
<svg style="left:467px;top:40px;" width="19" height="22" viewBox="0 0 19 22"><path d="M1 1.4 V20.6 L17.6 11 Z" fill="#b9cde6"/></svg>
<svg style="left:500px;top:40px;" width="24" height="22" viewBox="0 0 24 22"><rect x="19" y="1.4" width="3.4" height="19.2" fill="#b9cde6"/><path d="M1 1.4 V20.6 L17.8 11 Z" fill="#b9cde6"/></svg>
<svg style="left:537px;top:36px;" width="30" height="30" viewBox="0 0 30 30"><circle cx="15" cy="15" r="13" fill="#fff" stroke="#3d7abf" stroke-width="1.7"/><path d="M23 7 L18 18 L12 12 Z" fill="#e05c3c"/><path d="M7 23 L12 12 L18 18 Z" fill="#3d7abf"/><circle cx="15" cy="15" r="1.3" fill="#fff"/></svg>
<div style="left:573px;top:37px;width:1px;height:29px;background:#d4d4d4"></div>
<svg style="left:581px;top:37px;" width="28" height="28" viewBox="0 0 28 28"><circle cx="11" cy="10.8" r="8.1" fill="none" stroke="#7f7f7f" stroke-width="1.5"/><path d="M17 16.8 L25.6 25.4" stroke="#7f7f7f" stroke-width="2.2"/><path d="M6 10.8 H16" stroke="#7f7f7f" stroke-width="1.6"/></svg>
<svg style="left:618px;top:35px;" width="32" height="32" viewBox="0 0 32 32"><circle cx="13" cy="13" r="9.9" fill="none" stroke="#7f7f7f" stroke-width="1.6"/><path d="M20.2 20.2 L29 29" stroke="#7f7f7f" stroke-width="2.4"/></svg>
<svg style="left:656px;top:50px;" width="7" height="4" viewBox="0 0 7 4"><path d="M0.2 0.2 H6 L3.1 3.1 Z" fill="#333"/></svg>
<svg style="left:671px;top:37px;" width="28" height="28" viewBox="0 0 28 28"><circle cx="11" cy="10.8" r="8.1" fill="none" stroke="#7f7f7f" stroke-width="1.5"/><path d="M17 16.8 L25.6 25.4" stroke="#7f7f7f" stroke-width="2.2"/><path d="M6 10.8 H16 M11 5.8 V15.8" stroke="#7f7f7f" stroke-width="1.6"/></svg>
<div style="left:706px;top:37px;width:1px;height:29px;background:#d4d4d4"></div>
<svg style="left:717px;top:38px;" width="22" height="27" viewBox="0 0 22 27"><path d="M3.4 2.2 H13.6 L19.4 8 V24.2 Q19.4 25.2 18.4 25.2 H3.4 Q2.4 25.2 2.4 24.2 V3.2 Q2.4 2.2 3.4 2.2 Z M13.6 2.2 V8 H19.4" fill="#fff" stroke="#6e6e6e" stroke-width="1.8" stroke-linejoin="round"/><path d="M5.4 12.8 H16.6 M5.4 16.6 H16.6 M5.4 20.4 H16.6" stroke="#6e6e6e" stroke-width="1.6"/></svg>
<svg style="left:749.6px;top:50px;" width="7" height="4" viewBox="0 0 7 4"><path d="M0.2 0.2 H6 L3.1 3.1 Z" fill="#333"/></svg>
<div style="left:760.3px;top:32px;width:37.6px;height:37.6px;background:#93c0e5"></div>
<svg style="left:768px;top:38px;" width="23" height="28" viewBox="0 0 23 28"><path d="M5.4 2.2 H20.4 M1.6 1.4 V10 H20.4 V1.4" fill="none" stroke="#6e6e6e" stroke-width="1.9"/><path d="M1.6 25.4 V15.6 H14.6 L20.4 20.6 V25.4 M14.6 15.6 V20.6 H20.4 M5.2 25.6 H16.4" fill="none" stroke="#6e6e6e" stroke-width="1.9"/></svg>
<svg style="left:803px;top:34px;" width="28" height="32" viewBox="0 0 28 32"><g fill="#fff" stroke="#cfcfcf" stroke-width="1.7" stroke-linejoin="round"><path transform="translate(15.4,1.4)" d="M1 1 H7 L10.4 4.2 V12 H1 Z M7 1 V4.2 H10.4"/><path transform="translate(1,17.6)" d="M1 1 H7 L10.4 4.2 V12 H1 Z M7 1 V4.2 H10.4"/><path transform="translate(15.4,17.6)" d="M1 1 H7 L10.4 4.2 V12 H1 Z M7 1 V4.2 H10.4"/></g></svg>
<div style="left:839px;top:37px;width:1px;height:29px;background:#d4d4d4"></div>
<svg style="left:847px;top:38px;" width="27" height="26" viewBox="0 0 27 26"><path d="M7.6 11 V3 Q7.6 2.2 8.4 2.2 H19 L24.8 7.8 V22.8 Q24.8 23.8 23.8 23.8 H8.6 Q7.6 23.8 7.6 22.8 V20.4 M19 2.2 V7.8 H24.8" fill="none" stroke="#6e6e6e" stroke-width="1.7" stroke-linejoin="round"/><path d="M1.6 15.8 H14 M9.8 11.2 L14.6 15.8 L9.8 20.4" fill="none" stroke="#4f9b7d" stroke-width="1.8"/></svg>
<svg style="left:883px;top:50px;" width="7" height="4" viewBox="0 0 7 4"><path d="M0.2 0.2 H6 L3.1 3.1 Z" fill="#333"/></svg>
<svg style="left:899px;top:42px;" width="26" height="20" viewBox="0 0 26 20"><rect x="1.4" y="1.6" width="23" height="16.6" rx="1.6" fill="#fff" stroke="#7f7f7f" stroke-width="1.8"/><path d="M2 2.4 L12.9 12.6 L23.8 2.4 M2 17.6 L9.4 9.6 M23.8 17.6 L16.4 9.6" fill="none" stroke="#7f7f7f" stroke-width="1.6"/></svg>
<svg style="left:934px;top:50px;" width="7" height="4" viewBox="0 0 7 4"><path d="M0.2 0.2 H6 L3.1 3.1 Z" fill="#333"/></svg>
<svg style="left:950px;top:36px;" width="26" height="30" viewBox="0 0 26 30"><defs><clipPath id="wmc"><path d="M4.6 4.6 H14.6 L20.8 10.6 V25 H4.6 Z"/></clipPath></defs><g clip-path="url(#wmc)" stroke="#3d7abf" stroke-width="1.35"><path d="M0 13.4 L13.4 0 M0 19 L19 0 M0 24.6 L24.6 0 M1.2 29 L25 5.2 M6.8 29 L25 10.8 M12.4 29 L25 16.4 M18 29 L25 22"/></g><path d="M2 2 H16 L23.4 9 V27.6 H2 Z" fill="none" stroke="#7f7f7f" stroke-width="1.8" stroke-linejoin="round"/><path d="M16 2 V9 H23.4 Z" fill="#7f7f7f"/></svg>
<svg style="left:1420px;top:60px;" width="7" height="7" viewBox="0 0 7 7"><path d="M6.2 0.4 V6.2 H0.4 Z" fill="#666"/></svg>
<div style="left:311px;top:78px;width:816px;height:600px;background:#ffffff;border:1px solid #1b80d4;"></div>
<div style="left:347px;top:181px;width:735px;height:1px;background:#d2d2d2;"></div>
<svg style="left:348px;top:114px;" width="43" height="57" viewBox="0 0 43.5 57"><defs><linearGradient id="lg" x1="0" y1="0" x2="0" y2="1"><stop offset="0" stop-color="#242845"/><stop offset="0.10" stop-color="#383c60"/><stop offset="0.30" stop-color="#737aa6"/><stop offset="0.37" stop-color="#8d93c2"/><stop offset="0.43" stop-color="#c9cde6"/><stop offset="0.60" stop-color="#dfe2f0"/><stop offset="0.88" stop-color="#f1f2f9"/><stop offset="1" stop-color="#fdfdff"/></linearGradient><linearGradient id="bz" x1="0" y1="0" x2="0" y2="1"><stop offset="0" stop-color="#9a9dac"/><stop offset="1" stop-color="#d6d8e2"/></linearGradient><filter id="bl" x="-20%" y="-20%" width="140%" height="140%"><feGaussianBlur stdDeviation="0.6"/></filter><filter id="bl2" x="-30%" y="-30%" width="160%" height="160%"><feGaussianBlur stdDeviation="1.1"/></filter></defs><rect x="0" y="0" width="43.5" height="57" fill="url(#lg)"/><g filter="url(#bl)"><path d="M0 21.4 Q9 20.4 17 22.6 T30 24 T43.5 22.2 V24.2 Q36 26 29 25.6 T17 24.4 T0 23.2 Z" fill="#7a7ed2" opacity="0.9"/><rect x="8.8" y="1.4" width="19.6" height="17.4" rx="1.2" fill="url(#bz)"/><rect x="10.6" y="3" width="16" height="13.6" fill="#15151c"/><rect x="17.6" y="18.6" width="3" height="2.8" fill="#3c3f55"/><rect x="15" y="27.8" width="5.8" height="7.4" rx="1.2" fill="#262832"/><path d="M10.4 30.4 L14.6 29.4 M21.2 29.4 L27 30.2" stroke="#8d90a4" stroke-width="1.6"/><rect x="9.4" y="31.4" width="3.2" height="7.4" rx="1.2" transform="rotate(20 11 35)" fill="#666979"/><rect x="25.8" y="30.8" width="3" height="9.4" rx="1.2" fill="#6e7184"/><rect x="14.6" y="35.6" width="7.6" height="3.4" fill="#6a6d80"/><rect x="14.4" y="38.8" width="3" height="8.6" fill="#585b6d"/><rect x="19.6" y="38.8" width="3" height="8.2" fill="#6c6f84"/><rect x="13.6" y="46.4" width="4.6" height="3.4" fill="#33353f"/><rect x="19.4" y="46.2" width="4.8" height="2.8" fill="#7e8196"/></g><path d="M20 48.4 L41 52 L40.4 54 L18 51 Z" fill="#a4a8c2" opacity="0.75" filter="url(#bl2)"/></svg>
<div class="t" id="t75" style="top:116.07px;font-size:12.2px;line-height:12.2px;color:#0d0d0d;left:702.00px;transform:scaleX(0.9406);transform-origin:left center;">Devpace Company</div>
<div class="t" id="t76" style="top:132.67px;font-size:12.2px;line-height:12.2px;color:#0d0d0d;left:702.00px;transform:scaleX(0.9520);transform-origin:left center;">179 Lincoln Ave, St#L9</div>
<div class="t" id="t77" style="top:148.67px;font-size:12.2px;line-height:12.2px;color:#0d0d0d;left:702.00px;transform:scaleX(0.9350);transform-origin:left center;">Orange, NJ, 07050, usa</div>
<div class="t" id="t78" style="top:115.97px;font-size:12.2px;line-height:12.2px;color:#0d0d0d;font-weight:700;left:892.00px;transform:scaleX(0.7795);transform-origin:left center;">P:</div>
<div class="t" id="t79" style="top:115.97px;font-size:12.2px;line-height:12.2px;color:#0d0d0d;left:904.00px;transform:scaleX(0.9683);transform-origin:left center;">973-840-7788</div>
<div class="t" id="t80" style="top:134.07px;font-size:12.2px;line-height:12.2px;color:#0d0d0d;font-weight:700;left:892.00px;transform:scaleX(0.7795);transform-origin:left center;">E:</div>
<div class="t" id="t81" style="top:134.07px;font-size:12.2px;line-height:12.2px;color:#0d0d0d;left:904.00px;transform:scaleX(0.9794);transform-origin:left center;">orders@supremeplumbingnj.com</div>
<div class="t" id="t82" style="top:151.47px;font-size:12.2px;line-height:12.2px;color:#0d0d0d;font-weight:700;left:892.00px;transform:scaleX(0.7642);transform-origin:left center;">F:</div>
<div class="t" id="t83" style="top:151.47px;font-size:12.2px;line-height:12.2px;color:#0d0d0d;left:904.00px;transform:scaleX(0.9506);transform-origin:left center;">421535742</div>
<div style="left:349px;top:213px;width:4px;height:34px;background:#000"></div><div style="left:355px;top:213px;width:2px;height:34px;background:#000"></div><div style="left:365px;top:213px;width:2px;height:34px;background:#000"></div><div style="left:370px;top:213px;width:2px;height:34px;background:#000"></div><div style="left:376px;top:213px;width:6px;height:34px;background:#000"></div><div style="left:384px;top:213px;width:4px;height:34px;background:#000"></div><div style="left:392px;top:213px;width:3px;height:34px;background:#000"></div><div style="left:399px;top:213px;width:6px;height:34px;background:#000"></div><div style="left:407px;top:213px;width:2px;height:34px;background:#000"></div><div style="left:413px;top:213px;width:2px;height:34px;background:#000"></div><div style="left:418px;top:213px;width:6px;height:34px;background:#000"></div><div style="left:428px;top:213px;width:4px;height:34px;background:#000"></div><div style="left:434px;top:213px;width:6px;height:34px;background:#000"></div><div style="left:443px;top:213px;width:2px;height:34px;background:#000"></div><div style="left:447px;top:213px;width:4px;height:34px;background:#000"></div><div style="left:455px;top:213px;width:4px;height:34px;background:#000"></div><div style="left:461px;top:213px;width:5px;height:34px;background:#000"></div><div style="left:470px;top:213px;width:2px;height:34px;background:#000"></div><div style="left:476px;top:213px;width:6px;height:34px;background:#000"></div><div style="left:484px;top:213px;width:2px;height:34px;background:#000"></div><div style="left:490px;top:213px;width:3px;height:34px;background:#000"></div><div style="left:497px;top:213px;width:4px;height:34px;background:#000"></div><div style="left:505px;top:213px;width:6px;height:34px;background:#000"></div><div style="left:514px;top:213px;width:2px;height:34px;background:#000"></div><div style="left:518px;top:213px;width:2px;height:34px;background:#000"></div><div style="left:524px;top:213px;width:4px;height:34px;background:#000"></div><div style="left:530px;top:213px;width:2px;height:34px;background:#000"></div><div style="left:539px;top:213px;width:4px;height:34px;background:#000"></div><div style="left:549px;top:213px;width:6px;height:34px;background:#000"></div><div style="left:557px;top:213px;width:2px;height:34px;background:#000"></div><div style="left:561px;top:213px;width:3px;height:34px;background:#000"></div>
<div class="t" id="t84" style="top:255.72px;font-size:19px;line-height:19px;color:#0c0c0c;font-weight:700;left:348.00px;transform:scaleX(1.0715);transform-origin:left center;">Invoice I-0032224</div>
<div style="left:347px;top:308px;width:356px;height:96px;background:#fff;border:1px solid #c9c9c9;"></div>
<div style="left:348px;top:309px;width:354px;height:30px;background:#f5f5f5;"></div>
<div class="t" id="t85" style="top:317.50px;font-size:12.4px;line-height:12.4px;color:#0d0d0d;font-weight:700;left:355.70px;transform:scaleX(0.9151);transform-origin:left center;">Bill to</div>
<div style="left:726.5px;top:308px;width:356px;height:96px;background:#fff;border:1px solid #c9c9c9;"></div>
<div style="left:727.5px;top:309px;width:354px;height:30px;background:#f5f5f5;"></div>
<div class="t" id="t86" style="top:318.70px;font-size:12.4px;line-height:12.4px;color:#0d0d0d;font-weight:700;left:735.20px;transform:scaleX(0.8694);transform-origin:left center;">Ship to</div>
<div class="t" id="t87" style="top:348.97px;font-size:12.2px;line-height:12.2px;color:#0d0d0d;left:355.75px;transform:scaleX(0.9333);transform-origin:left center;">Customer 1</div>
<div style="left:347px;top:429px;width:735px;height:65px;background:#fff;border:1px solid #c9c9c9;"></div>
<div style="left:348px;top:430px;width:733px;height:30px;background:#f5f5f5;"></div>
<div style="left:523px;top:430px;width:1px;height:63px;background:#c9c9c9;"></div>
<div style="left:700px;top:430px;width:1px;height:63px;background:#c9c9c9;"></div>
<div style="left:923px;top:430px;width:1px;height:63px;background:#c9c9c9;"></div>
<div class="t" id="t88" style="top:438.80px;font-size:12.4px;line-height:12.4px;color:#0d0d0d;font-weight:700;left:355.75px;transform:scaleX(0.9382);transform-origin:left center;">Date</div>
<div class="t" id="t89" style="top:439.50px;font-size:12.4px;line-height:12.4px;color:#0d0d0d;font-weight:700;left:531.00px;transform:scaleX(0.9643);transform-origin:left center;">Due Date</div>
<div class="t" id="t90" style="top:439.50px;font-size:12.4px;line-height:12.4px;color:#0d0d0d;font-weight:700;left:707.75px;transform:scaleX(0.9027);transform-origin:left center;">PO #</div>
<div class="t" id="t91" style="top:439.90px;font-size:12.4px;line-height:12.4px;color:#0d0d0d;font-weight:700;left:931.00px;transform:scaleX(0.9647);transform-origin:left center;">Terms</div>
<div class="t" id="t92" style="top:469.77px;font-size:12.2px;line-height:12.2px;color:#0d0d0d;left:355.75px;transform:scaleX(1.0082);transform-origin:left center;">09/22/2020</div>
<div class="t" id="t93" style="top:469.77px;font-size:12.2px;line-height:12.2px;color:#0d0d0d;left:531.00px;transform:scaleX(0.9918);transform-origin:left center;">09/22/2020</div>
<div style="left:347px;top:559px;width:735px;height:52.5px;background:#fff;border:1px solid #c9c9c9;border-top:0;"></div>
<div style="left:347px;top:529px;width:735px;height:30.5px;background:#014e89;"></div>
<div style="left:531px;top:529px;width:1px;height:30.5px;background:#e8eef5;"></div>
<div style="left:531px;top:559.5px;width:1px;height:51.5px;background:#c9c9c9;"></div>
<div style="left:866px;top:529px;width:1px;height:30.5px;background:#e8eef5;"></div>
<div style="left:866px;top:559.5px;width:1px;height:51.5px;background:#c9c9c9;"></div>
<div style="left:958px;top:529px;width:1px;height:30.5px;background:#e8eef5;"></div>
<div style="left:958px;top:559.5px;width:1px;height:51.5px;background:#c9c9c9;"></div>
<div class="t" id="t94" style="top:538.50px;font-size:12.4px;line-height:12.4px;color:#fff;font-weight:700;left:355.50px;transform:scaleX(0.8712);transform-origin:left center;">UPC</div>
<div class="t" id="t95" style="top:538.50px;font-size:12.4px;line-height:12.4px;color:#fff;font-weight:700;left:540.25px;transform:scaleX(0.9285);transform-origin:left center;">Description</div>
<div class="t" id="t96" style="top:538.50px;font-size:12.4px;line-height:12.4px;color:#fff;font-weight:700;left:311.80px;width:1200px;text-align:center;transform:scaleX(0.9494);transform-origin:center center;">Rate</div>
<div class="t" id="t97" style="top:538.50px;font-size:12.4px;line-height:12.4px;color:#fff;font-weight:700;left:418.80px;width:1200px;text-align:center;transform:scaleX(0.9506);transform-origin:center center;">Amount</div>
<div class="t" id="t98" style="top:571.67px;font-size:12.2px;line-height:12.2px;color:#0d0d0d;left:355.50px;transform:scaleX(0.9366);transform-origin:left center;">CurrencyDisc</div>
<div class="t" id="t99" style="top:587.67px;font-size:12.2px;line-height:12.2px;color:#0d0d0d;left:355.50px;transform:scaleX(0.9143);transform-origin:left center;">1393</div>
<div class="t" id="t100" style="top:571.77px;font-size:12.2px;line-height:12.2px;color:#0d0d0d;left:-251.00px;width:1200px;text-align:right;transform:scaleX(0.9180);transform-origin:right center;">$0.00</div>
<div class="t" id="t101" style="top:571.77px;font-size:12.2px;line-height:12.2px;color:#0d0d0d;left:-128.50px;width:1200px;text-align:right;transform:scaleX(0.9016);transform-origin:right center;">$0.00</div>
<div class="t" id="t102" style="top:653.50px;font-size:12.4px;line-height:12.4px;color:#0d0d0d;font-weight:700;left:885.30px;transform:scaleX(0.9157);transform-origin:left center;">TOTAL (USD):</div>
<div class="t" id="t103" style="top:653.50px;font-size:12.4px;line-height:12.4px;color:#0d0d0d;font-weight:700;left:-119.00px;width:1200px;text-align:right;transform:scaleX(0.9769);transform-origin:right center;">$0.00</div>
<div style="left:347px;top:79px;width:1px;height:590px;background:repeating-linear-gradient(180deg,#c4c4c4 0,#c4c4c4 5px,transparent 5px,transparent 10px) 0 9px;"></div><div style="left:1082px;top:79px;width:1px;height:590px;background:repeating-linear-gradient(180deg,#c4c4c4 0,#c4c4c4 5px,transparent 5px,transparent 10px) 0 9px;"></div><div style="left:312px;top:113px;width:814px;height:1px;background:repeating-linear-gradient(90deg,#c4c4c4 0,#c4c4c4 5px,transparent 5px,transparent 10px) 9px 0;"></div></div></div>
<div style="left:139px;top:980px;width:1523px;height:2px;background:#333942;"></div>
<div style="left:729px;top:980px;width:47px;height:2px;background:#6b6f75;"></div>
<div style="left:0px;top:980px;width:139px;height:2px;background:#f4f4f4;"></div>
</div>
</body></html>
